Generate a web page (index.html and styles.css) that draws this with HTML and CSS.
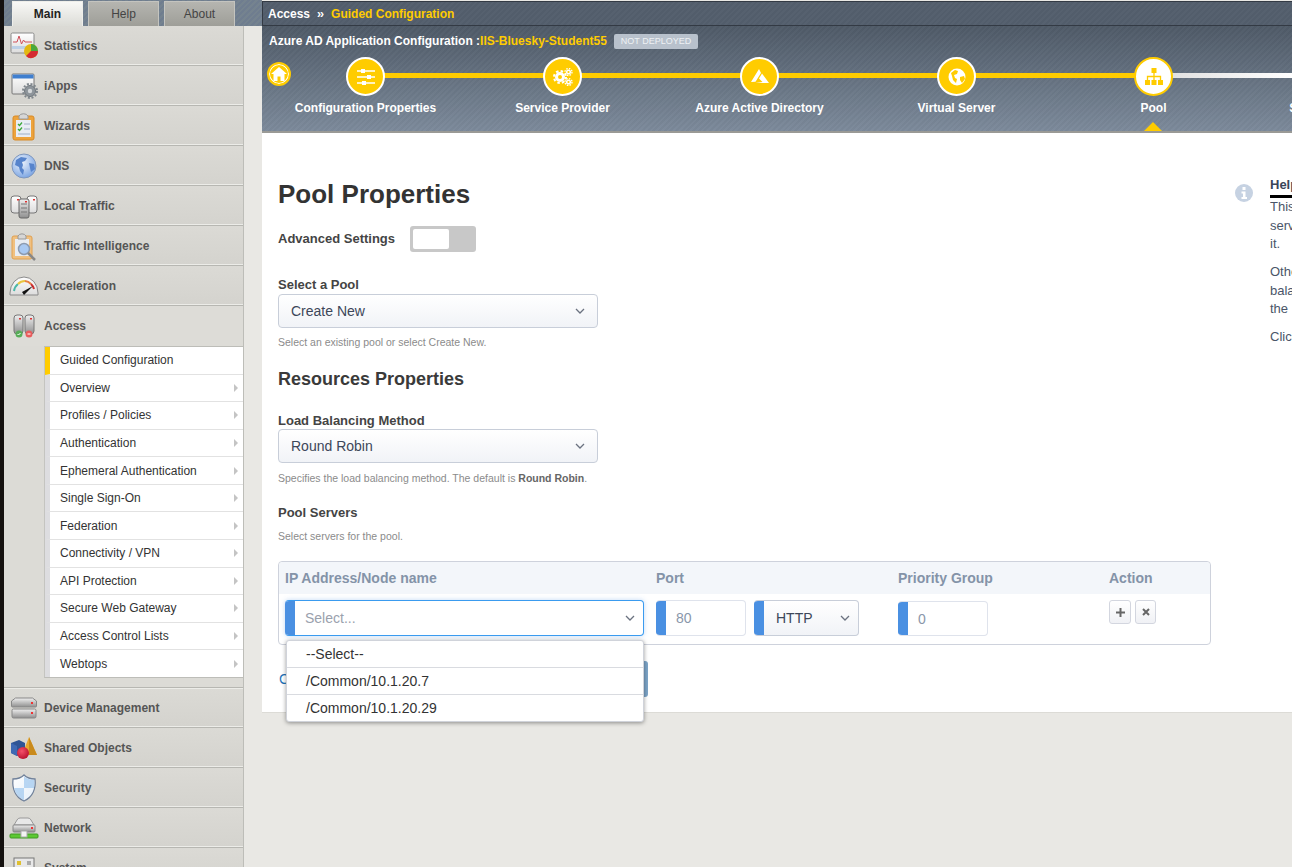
FILE: index.html
```html
<!DOCTYPE html>
<html lang="en">
<head>
<meta charset="utf-8">
<title>Pool Properties</title>
<link rel="stylesheet" href="styles.css">
</head>
<body>
<svg class="defs" aria-hidden="true">
  <defs>
    <linearGradient id="metal" x1="0" y1="0" x2="0" y2="1"><stop offset="0" stop-color="#f0f0f0"/><stop offset="1" stop-color="#8f8f8f"/></linearGradient>
    <linearGradient id="paper" x1="0" y1="0" x2="0" y2="1"><stop offset="0" stop-color="#fff"/><stop offset="1" stop-color="#dcdcdc"/></linearGradient>
    <radialGradient id="globe" cx=".4" cy=".35" r=".75"><stop offset="0" stop-color="#eef4fc"/><stop offset="1" stop-color="#6f9ce0"/></radialGradient>
    <radialGradient id="ball" cx=".4" cy=".35" r=".7"><stop offset="0" stop-color="#f4506a"/><stop offset="1" stop-color="#b80f2c"/></radialGradient>
    <linearGradient id="shield" x1="0" y1="0" x2="1" y2="1"><stop offset="0" stop-color="#fff"/><stop offset="1" stop-color="#e4eef8"/></linearGradient>
  </defs>
</svg>
<div class="app">
  <div class="edge"></div>
  <div class="left">
    <div class="tabs">
      <div class="tab tab-on">Main</div>
      <div class="tab">Help</div>
      <div class="tab">About</div>
    </div>
    <nav class="nav">
      <div class="nav-row">
        <span class="nav-ico"><svg width="30" height="28" viewBox="0 0 30 28"><rect x="2" y="1" width="23" height="20" rx="1.5" fill="url(#paper)" stroke="#8a8a8a"/><rect x="3" y="14" width="21" height="3" fill="#bcd0e6"/><path d="M4 10h4l2-6 2.500 8 2-4 1.500 2h7" fill="none" stroke="#d0505a" stroke-width="1"/><circle cx="22" cy="19" r="7" fill="#e2b812"/><path d="M22 19V12a7 7 0 0 1 7 7z" fill="#4aa83c"/><path d="M22 19h7a7 7 0 0 1-12 5z" fill="#d42a32"/></svg></span>
        <span>Statistics</span>
      </div>
      <div class="nav-row">
        <span class="nav-ico"><svg width="30" height="28" viewBox="0 0 30 28"><rect x="3" y="2" width="22" height="20" rx="1" fill="url(#paper)" stroke="#777"/><rect x="3.500" y="2.500" width="21" height="4" fill="#3f7fcf"/><circle cx="21" cy="19" r="5.500" fill="#8e959b" stroke="#6f767c"/><circle cx="21" cy="19" r="7" fill="none" stroke="#7f868c" stroke-width="2" stroke-dasharray="2 1.700"/><circle cx="21" cy="19" r="2.200" fill="#d5d8da"/></svg></span>
        <span>iApps</span>
      </div>
      <div class="nav-row">
        <span class="nav-ico"><svg width="30" height="30" viewBox="0 0 30 30"><rect x="4" y="5" width="21" height="24" rx="2" fill="#eda33c" stroke="#d98a24"/><rect x="7" y="9" width="15" height="17" fill="#e9edf4"/><path d="M10 8V5a5 4 0 0 1 9 0v3z" fill="#d6d6d6" stroke="#999"/><path d="M9 13l1.500 1.500 2.500-3M9 18l1.500 1.500 2.500-3" fill="none" stroke="#3ba83a" stroke-width="1.300"/><path d="M15 13h6M15 18h6M9 23h12" stroke="#9fb0c8"/></svg></span>
        <span>Wizards</span>
      </div>
      <div class="nav-row">
        <span class="nav-ico"><svg width="28" height="28" viewBox="0 0 28 28"><circle cx="14" cy="14" r="12" fill="url(#globe)" stroke="#7f97bd"/><path d="M6 8l5-3 6 1-2 3-3 1 1 3-1 3 2 2-1 5-3-4-1-4-4-2zM19 11l5 1 1 5-4 3-1-4z" fill="#5784cc"/></svg></span>
        <span>DNS</span>
      </div>
      <div class="nav-row">
        <span class="nav-ico"><svg width="30" height="28" viewBox="0 0 30 28"><rect x="2" y="4" width="10" height="17" rx="3" fill="url(#paper)" stroke="#777"/><rect x="18" y="4" width="10" height="17" rx="3" fill="url(#paper)" stroke="#777"/><rect x="10" y="7" width="10" height="19" rx="2" fill="url(#metal)" stroke="#666"/><path d="M12 12h6M12 16h6M12 20h6" stroke="#777"/><rect x="16" y="9" width="2" height="1.500" fill="#d33"/><rect x="8" y="7" width="2" height="1.500" fill="#d33"/><rect x="24" y="7" width="2" height="1.500" fill="#d33"/></svg></span>
        <span>Local Traffic</span>
      </div>
      <div class="nav-row">
        <span class="nav-ico"><svg width="30" height="30" viewBox="0 0 30 30"><rect x="3" y="5" width="20" height="23" rx="2" fill="#f0c080" stroke="#e0a050"/><rect x="6" y="8" width="14" height="17" fill="#e8ecf2"/><path d="M9 8V5a4.500 4 0 0 1 8 0v3z" fill="#d6d6d6" stroke="#999"/><circle cx="15" cy="18" r="5.500" fill="#a9c9f2" stroke="#8d9bb0" stroke-width="1.500"/><path d="M19 22l7 7" stroke="#888" stroke-width="2.500"/></svg></span>
        <span>Traffic Intelligence</span>
      </div>
      <div class="nav-row">
        <span class="nav-ico"><svg width="30" height="22" viewBox="0 0 30 22"><path d="M1 18a14 16 0 0 1 28 0v2H1z" fill="url(#paper)" stroke="#8a8a8a"/><path d="M5 16a10 11 0 0 1 4-7" fill="none" stroke="#4cb8a8" stroke-width="2"/><path d="M9 9a10 11 0 0 1 7-3" fill="none" stroke="#e8c640" stroke-width="2"/><path d="M16 6a10 11 0 0 1 6 3" fill="none" stroke="#e88040" stroke-width="2"/><path d="M22 9a10 11 0 0 1 3 5" fill="none" stroke="#d03030" stroke-width="2"/><path d="M13 17l11-6-9 9z" fill="#111"/></svg></span>
        <span>Acceleration</span>
      </div>
      <div class="nav-row nav-open">
        <span class="nav-ico"><svg width="28" height="28" viewBox="0 0 28 28"><rect x="4" y="3" width="9" height="19" rx="3" fill="url(#metal)" stroke="#777"/><rect x="15" y="3" width="9" height="19" rx="3" fill="url(#metal)" stroke="#777"/><rect x="9" y="6" width="2" height="1.500" fill="#d33"/><rect x="20" y="6" width="2" height="1.500" fill="#d33"/><circle cx="9" cy="22" r="3.500" fill="#58ad58"/><circle cx="19" cy="22" r="3.500" fill="#e85c5c"/><path d="M7.500 22l1 1 2-2" fill="none" stroke="#fff"/><path d="M17.500 22h3" stroke="#fff"/></svg></span>
        <span>Access</span>
      </div>
      <div class="subnav">
        <div class="sub sub-on">Guided Configuration</div>
        <div class="sub">Overview</div>
        <div class="sub">Profiles / Policies</div>
        <div class="sub">Authentication</div>
        <div class="sub">Ephemeral Authentication</div>
        <div class="sub">Single Sign-On</div>
        <div class="sub">Federation</div>
        <div class="sub">Connectivity / VPN</div>
        <div class="sub">API Protection</div>
        <div class="sub">Secure Web Gateway</div>
        <div class="sub">Access Control Lists</div>
        <div class="sub">Webtops</div>
      </div>
      <div class="nav-row nav-after">
        <span class="nav-ico"><svg width="28" height="24" viewBox="0 0 28 24"><path d="M1 10V5l4-3h17l4 3v5a1 1 0 0 1-1 1H2a1 1 0 0 1-1-1z" fill="url(#metal)" stroke="#888" transform="translate(.5 0)"/><rect x="2" y="13" width="24" height="9" rx="1.500" fill="url(#metal)" stroke="#888"/><rect x="21" y="6" width="2" height="2" fill="#e33"/><rect x="21" y="16" width="2" height="2" fill="#e33"/></svg></span>
        <span>Device Management</span>
      </div>
      <div class="nav-row">
        <span class="nav-ico"><svg width="32" height="26" viewBox="0 0 32 26"><path d="M21 2l8 18H14z" fill="#e8a82e"/><path d="M21 2l8 18h-8z" fill="#c98a1c"/><path d="M3 8l8-3 6 3v10l-8 3-6-3z" fill="#2f5596"/><path d="M3 8l6 3v10l-6-3z" fill="#3e69b4"/><circle cx="15" cy="18" r="6" fill="url(#ball)"/></svg></span>
        <span>Shared Objects</span>
      </div>
      <div class="nav-row">
        <span class="nav-ico"><svg width="26" height="28" viewBox="0 0 26 28"><path d="M13 1c3 3 7 4 11 4 1 9-2 18-11 22C4 23 1 14 2 5c4 0 8-1 11-4z" fill="url(#shield)" stroke="#70819a" stroke-width="1.300"/><path d="M13 2.500V14h10c.3-2.500.3-5.500.2-8-3.700 0-7.200-1.200-10.200-3.500zM13 14H3.200c1 5 4 9.500 9.800 12z" fill="#a9cdf0" opacity=".8"/></svg></span>
        <span>Security</span>
      </div>
      <div class="nav-row">
        <span class="nav-ico"><svg width="30" height="24" viewBox="0 0 30 24"><path d="M5 9l3-5q1-2 3-2h8q2 0 3 2l3 5z" fill="#e8e8e8" stroke="#999"/><rect x="4" y="9" width="22" height="7" rx="1" fill="url(#metal)" stroke="#888"/><rect x="22" y="11" width="2" height="2" fill="#e33"/><rect x="1" y="18" width="28" height="4" rx="1" fill="#5cc832" stroke="#3f9a22"/><rect x="12" y="15" width="6" height="6" fill="#f4f4f4" stroke="#aaa"/></svg></span>
        <span>Network</span>
      </div>
      <div class="nav-row">
        <span class="nav-ico"><svg width="26" height="26" viewBox="0 0 26 26"><rect x="3" y="3" width="20" height="20" fill="#e8e8e8" stroke="#777"/><rect x="6" y="6" width="4" height="4" fill="#e0c030"/><rect x="16" y="6" width="4" height="4" fill="#aaa"/></svg></span>
        <span>System</span>
      </div>
    </nav>
  </div>

  <main class="main">
    <div class="crumb"><span>Access</span><span class="crumb-sep">››</span><span class="crumb-on">Guided Configuration</span></div>
    <header class="wizard">
      <div class="wiz-title">
        <span>Azure AD Application Configuration :<span class="wiz-name">IIS-Bluesky-Student55</span></span>
        <span class="badge">NOT DEPLOYED</span>
      </div>
      <div class="home"><svg width="16" height="14" viewBox="0 0 16 14"><path d="M8 0L0 7h2.500v7h4V9.500h3V14h4V7H16z" fill="#fff"/></svg></div>
      <div class="steps">
        <div class="step">
          <div class="dot"><svg width="18" height="16" viewBox="0 0 18 16"><path d="M0 2h18M0 8h18M0 14h18" stroke="#fff" stroke-width="1.500"/><rect x="4" y="0" width="4" height="4" fill="#fff"/><rect x="10" y="6" width="4" height="4" fill="#fff"/><rect x="5" y="12" width="4" height="4" fill="#fff"/></svg></div>
          <div class="step-label">Configuration Properties</div>
        </div>
        <div class="step">
          <div class="dot"><svg width="20" height="18" viewBox="0 0 20 18"><g fill="none" stroke="#fff"><circle cx="7" cy="9" r="3.500" stroke-width="3"/><circle cx="7" cy="9" r="6" stroke-width="2" stroke-dasharray="2.500 2.200"/><circle cx="15.500" cy="4" r="1.800" stroke-width="1.500"/><circle cx="15.500" cy="4" r="3.500" stroke-width="1.300" stroke-dasharray="1.500 1.250"/><circle cx="15.500" cy="14" r="1.800" stroke-width="1.500"/><circle cx="15.500" cy="14" r="3.500" stroke-width="1.300" stroke-dasharray="1.500 1.250"/></g></svg></div>
          <div class="step-label">Service Provider</div>
        </div>
        <div class="step">
          <div class="dot"><svg width="18" height="15" viewBox="0 0 18 15"><path d="M8 0L0 13l4.500-.2L10 4zM11 4.500L8 9.500l3.500 3.500-7 1H18z" fill="#fff"/></svg></div>
          <div class="step-label">Azure Active Directory</div>
        </div>
        <div class="step">
          <div class="dot"><svg width="18" height="18" viewBox="0 0 18 18"><circle cx="9" cy="9" r="8.500" fill="#fff"/><path d="M3 5l4-3 3 1-1 3-3 1 1 3 2 1-1 4-3-3-1-4zM12 9l4-1 1 3-3 4-2-3z" fill="#fc0"/></svg></div>
          <div class="step-label">Virtual Server</div>
        </div>
        <div class="step step-on">
          <div class="dot"><svg width="18" height="17" viewBox="0 0 18 17"><path d="M6.500 0h5v5h-5zM0 12h5v5H0zM6.500 12h5v5h-5zM13 12h5v5h-5z" fill="#fc0"/><path d="M9 5v7M2.500 12V8.500h13V12" fill="none" stroke="#fc0" stroke-width="1.300"/></svg></div>
          <div class="step-label">Pool</div>
          <div class="pointer"></div>
        </div>
        <div class="step step-last">
          <div class="dot"></div>
          <div class="step-label">Session Management</div>
        </div>
      </div>
    </header>

    <section class="content">
      <div class="form">
        <h1 class="title">Pool Properties</h1>
        <div class="adv">
          <span class="label">Advanced Settings</span>
          <div class="toggle"><div class="knob"></div></div>
        </div>
        <div class="label label-pool">Select a Pool</div>
        <div class="select select-wide"><span>Create New</span><svg class="chev" width="10" height="6" viewBox="0 0 10 6"><path d="M1 1l4 4 4-4" fill="none" stroke="#6b7280" stroke-width="1.300"/></svg></div>
        <div class="hint hint-pool">Select an existing pool or select Create New.</div>
        <h2 class="subtitle">Resources Properties</h2>
        <div class="label label-lb">Load Balancing Method</div>
        <div class="select select-wide"><span>Round Robin</span><svg class="chev" width="10" height="6" viewBox="0 0 10 6"><path d="M1 1l4 4 4-4" fill="none" stroke="#6b7280" stroke-width="1.300"/></svg></div>
        <div class="hint hint-lb">Specifies the load balancing method. The default is <b>Round Robin</b>.</div>
        <div class="label label-servers">Pool Servers</div>
        <div class="hint hint-servers">Select servers for the pool.</div>

        <div class="pool-table">
          <div class="pool-head">
            <span>IP Address/Node name</span>
            <span>Port</span>
            <span>Priority Group</span>
            <span>Action</span>
          </div>
          <div class="pool-row">
            <div class="ctl ctl-focus"><span class="ctl-band"></span><span class="ctl-text ctl-ph">Select...</span><svg class="chev" width="10" height="6" viewBox="0 0 10 6"><path d="M1 1l4 4 4-4" fill="none" stroke="#6b7280" stroke-width="1.300"/></svg></div>
            <div class="port-group">
              <div class="ctl ctl-port"><span class="ctl-band"></span><span class="ctl-text ctl-num">80</span></div>
              <div class="ctl ctl-proto"><span class="ctl-band"></span><span class="ctl-text">HTTP</span><svg class="chev" width="10" height="6" viewBox="0 0 10 6"><path d="M1 1l4 4 4-4" fill="none" stroke="#6b7280" stroke-width="1.300"/></svg></div>
            </div>
            <div class="ctl ctl-prio"><span class="ctl-band"></span><span class="ctl-text ctl-num">0</span></div>
            <div class="actions">
              <div class="act"><svg width="9" height="9" viewBox="0 0 9 9"><path d="M4.500 0v9M0 4.500h9" stroke="#666" stroke-width="2"/></svg></div>
              <div class="act"><svg width="8" height="8" viewBox="0 0 8 8"><path d="M1 1l6 6M7 1L1 7" stroke="#666" stroke-width="2"/></svg></div>
            </div>
          </div>
          <div class="menu">
            <div class="menu-item">--Select--</div>
            <div class="menu-item">/Common/10.1.20.7</div>
            <div class="menu-item">/Common/10.1.20.29</div>
          </div>
        </div>

        <div class="footer">
          <span class="link">Cancel</span>
          <span class="btn"></span>
        </div>
      </div>

      <aside class="help">
        <div class="help-ico"><svg width="18" height="18" viewBox="0 0 18 18"><circle cx="9" cy="9" r="9" fill="#c6d2e2"/><rect x="7.500" y="3" width="3" height="3" fill="#fff"/><path d="M6.500 7.500h4V13h1.500v2H6.500v-2H8V9.500H6.500z" fill="#fff"/></svg></div>
        <div class="help-body">
          <div class="help-head">Help</div>
          <p>This<br>servers<br>it.</p>
          <p>Other<br>balancing<br>the</p>
          <p>Click</p>
        </div>
      </aside>
    </section>
  </main>
</div>
</body>
</html>
```
FILE: styles.css
```css
* { box-sizing: border-box; }
html, body { margin: 0; padding: 0; height: 100%; overflow: hidden; }
body { font-family: "Liberation Sans", Arial, sans-serif; background: #e9e8e4; color: #333; }
.defs { display: block; width: 0; height: 0; }

.app { display: flex; width: 1292px; height: 867px; overflow: hidden; }
.edge { flex: none; width: 4px; background: #14110f; }

.left { flex: none; width: 258px; display: flex; flex-direction: column; }
.tabs {
  flex: none; height: 26px; display: flex; gap: 5px; padding: 1px 0 0 8px;
  background: repeating-linear-gradient(135deg, #6f7d8f 0 2px, #75838f 2px 4px);
}
.tab {
  width: 71px; height: 25px; display: flex; align-items: center; justify-content: center;
  font-size: 12px; color: #444;
  background: linear-gradient(#b5b5b0, #9e9e98);
  border: 1px solid #c4c4bf; border-bottom: 0;
}
.tab-on { background: linear-gradient(#f8f8f6, #dcdcd7); font-weight: 700; color: #222; font-size: 12px; border-color: #eeeeea; }

.nav { width: 240px; border-right: 1px solid #bdbdb8; background: #dcdbd6; }
.nav-row {
  height: 40px; display: flex; align-items: center;
  font-size: 12px; font-weight: 700; color: #555;
  background: linear-gradient(#dbdad5, #d4d3ce);
  border-bottom: 1px solid #b7b7b2; box-shadow: inset 0 -1px 0 #ecece8;
}
.nav-open { height: 40px; border-bottom: 0; box-shadow: none; background: #dddcd7; }
.nav-after { height: 41px; border-top: 1px solid #b7b7b2; box-shadow: inset 0 -1px 0 #ecece8, inset 0 1px 0 #ecece8; }
.nav-ico { flex: none; width: 40px; display: flex; align-items: center; justify-content: center; padding-left: 0; }

.subnav {
  margin-left: 40px; padding: 0; height: 332px; background: #fff;
  border-left: 1px solid #c4c4c0; border-top: 1px solid #bdbdb8; border-bottom: 1px solid #bdbdb8;
  display: flex; flex-direction: column; margin-bottom: 9px; position: relative;
}
.sub {
  flex: 1; display: flex; align-items: center; padding-left: 10px;
  font-size: 12px; color: #333; background: #fff;
  border-left: 5px solid #dddde0; border-bottom: 1px solid #e2e2e2; position: relative;
}
.sub:last-child { border-bottom: 0; }
.sub-on { border-left-color: #fc0; }
.sub::after {
  content: ""; position: absolute; right: 5px; top: 50%; margin-top: -4px;
  border-left: 4px solid #c4c4c4; border-top: 4px solid transparent; border-bottom: 4px solid transparent;
}
.sub-on::after { display: none; }

.main { flex: 1; min-width: 0; overflow: hidden; display: flex; flex-direction: column; }
.crumb {
  flex: none; height: 25px; display: flex; align-items: center; gap: 7px; padding-left: 5px;
  margin-top: 1px;
  font-size: 12px; font-weight: 700; color: #fff;
  border: 1px solid #333a44; border-width: 1px 0 1px 1px;
  background: repeating-linear-gradient(135deg, #525d6b 0 2px, #56616f 2px 4px);
}
.crumb-sep { letter-spacing: -1px; margin-right: 1px; }
.crumb-on { color: #fc0; }

.wizard {
  flex: none; height: 107px; position: relative; overflow: hidden;
  background:
    repeating-linear-gradient(135deg, rgba(255,255,255,.02) 0 2px, rgba(0,0,0,.02) 2px 4px),
    linear-gradient(#4f5a67, #7c8a9b);
  border-bottom: 2px solid #9a9a96;
}
.wiz-title { height: 28px; display: flex; align-items: center; gap: 7px; padding: 2px 0 0 7px; font-size: 12px; font-weight: 700; color: #fff; }
.wiz-name { color: #fc0; }
.badge { height: 15px; padding: 0 7px; display: flex; align-items: center; background: #b8c1cc; border-radius: 2px; font-size: 9px; font-weight: 400; color: #eef1f4; }
.home {
  position: absolute; left: 5px; top: 36px; width: 24px; height: 24px; border-radius: 50%;
  background: #fc0; border: 2px solid #fc0; box-shadow: inset 0 0 0 1px #fff;
  display: flex; align-items: center; justify-content: center;
}
.steps { display: flex; padding-left: 5px; }
.step { flex: none; width: 197px; display: flex; flex-direction: column; align-items: center; position: relative; }
.step::before { content: ""; position: absolute; left: 98px; width: 197px; top: 19px; height: 5px; background: #fc0; }
.step-on::before { background: linear-gradient(90deg, #ddd, #fff 70%); }
.step-last::before { display: none; }
.dot {
  width: 39px; height: 39px; margin-top: 3px; border-radius: 50%; background: #fc0; border: 2px solid #fff;
  display: flex; align-items: center; justify-content: center; position: relative; z-index: 1;
}
.step-on .dot { background: #fff; border-color: #fc0; }
.step-last .dot { background: #fff; border-color: #ddd; }
.step-label { margin-top: 5px; font-size: 12px; line-height: 14px; font-weight: 700; color: #fff; white-space: nowrap; }
.pointer {
  position: absolute; left: 89px; top: 68px; width: 0; height: 0;
  border-left: 9px solid transparent; border-right: 9px solid transparent; border-bottom: 9px solid #fc0;
}

.content { flex: none; height: 580px; background: #fff; border-bottom: 1px solid #dcdbd6; display: flex; align-items: flex-start; }
.form { flex: none; width: 949px; padding: 46px 0 0 16px; }
.title { margin: 0; font-size: 26px; line-height: 30px; font-weight: 700; color: #333; }
.label { font-size: 13px; line-height: 16px; font-weight: 700; color: #444; }
.adv { display: flex; align-items: center; gap: 15px; margin-top: 17px; height: 26px; }
.toggle { width: 66px; height: 26px; background: #c8c8c8; border-radius: 3px; padding: 3px; }
.knob { width: 36px; height: 20px; background: #fff; border-radius: 2px; }
.label-pool { margin-top: 25px; margin-bottom: 1px; }
.select {
  display: flex; align-items: center; justify-content: space-between;
  height: 34px; padding: 0 12px 0 12px; font-size: 14px; color: #3d4759;
  background: linear-gradient(#fff, #f1f3f7); border: 1px solid #c8ced9; border-radius: 4px;
}
.select-wide { width: 320px; }
.hint { font-size: 10.500px; line-height: 14px; color: #8b8b8b; }
.hint b { color: #666; }
.hint-pool { margin-top: 7px; }
.subtitle { margin: 19px 0 0; font-size: 18px; line-height: 22px; font-weight: 700; color: #3a3a3a; }
.label-lb { margin-top: 23px; margin-bottom: 0; }
.hint-lb { margin-top: 8px; }
.label-servers { margin-top: 20px; }
.hint-servers { margin-top: 8px; }

.pool-table { position: relative; margin-top: 18px; width: 933px; height: 84px; border: 1px solid #ced2dc; border-radius: 4px; }
.pool-head {
  height: 32px; display: grid; grid-template-columns: 371px 242px 211px 1fr; align-items: center; padding-left: 6px;
  background: #f3f6fa; font-size: 14px; font-weight: 700; color: #8493a8; border-radius: 4px 4px 0 0;
}
.pool-row { display: grid; grid-template-columns: 371px 242px 211px 1fr; padding: 6px 0 0 6px; align-items: start; }
.ctl {
  height: 36px; display: flex; align-items: center; background: #fff; border: 1px solid #dfe3ec; border-left: 0; border-radius: 4px;
  font-size: 14px; color: #3d4759; overflow: hidden;
}
.ctl-band { flex: none; width: 10px; height: calc(100% + 2px); background: #4a90e2; }
.ctl-text { flex: 1; padding-left: 10px; }
.ctl .chev { margin-right: 8px; }
.ctl-focus { width: 359px; border-color: #3a9bef; box-shadow: 0 0 5px rgba(74,144,226,.35); }
.ctl-ph { color: #9aa1ad; }
.ctl-num { color: #8a97aa; }
.port-group { display: flex; gap: 8px; }
.ctl-port { width: 90px; }
.ctl-proto { width: 105px; background: linear-gradient(#fff, #f1f3f7); border-color: #c8ced9; }
.ctl-proto .ctl-text { padding-left: 12px; }
.ctl-prio { width: 90px; height: 35px; margin-top: 1px; }
.actions { display: flex; gap: 4px; }
.act {
  width: 22px; height: 24px; display: flex; align-items: center; justify-content: center;
  background: linear-gradient(#fff, #f0f1f5); border: 1px solid #d3d6df; border-radius: 3px;
}
.act + .act { width: 21px; }
.menu {
  position: absolute; left: 7px; top: 78px; width: 358px; background: #fff; z-index: 2;
  border: 1px solid #d0d3da; border-radius: 3px; box-shadow: 0 1px 4px rgba(0,0,0,.4);
}
.menu-item { height: 27px; display: flex; align-items: center; padding-left: 19px; font-size: 14px; color: #333; border-bottom: 1px solid #d9dbe0; }
.menu-item:last-child { border-bottom: 0; height: 26px; }

.footer { display: flex; align-items: center; justify-content: space-between; width: 370px; padding-left: 1px; margin-top: 16px; height: 36px; }
.link { font-size: 14px; color: #1f72b8; }
.btn { width: 60px; height: 36px; background: #7da5c8; border-radius: 3px; }

.help { flex: none; display: flex; gap: 17px; padding-top: 51px; margin-left: 24px; }
.help-ico { flex: none; width: 18px; height: 18px; }
.help-body { width: 200px; margin-top: -7px; font-size: 13px; line-height: 18.500px; color: #4a5568; }
.help-head { font-weight: 700; color: #3a4558; line-height: 16px; border-bottom: 3px solid #000; padding-bottom: 2px; }
.help-body p { margin: 0 0 9.500px; }
```
